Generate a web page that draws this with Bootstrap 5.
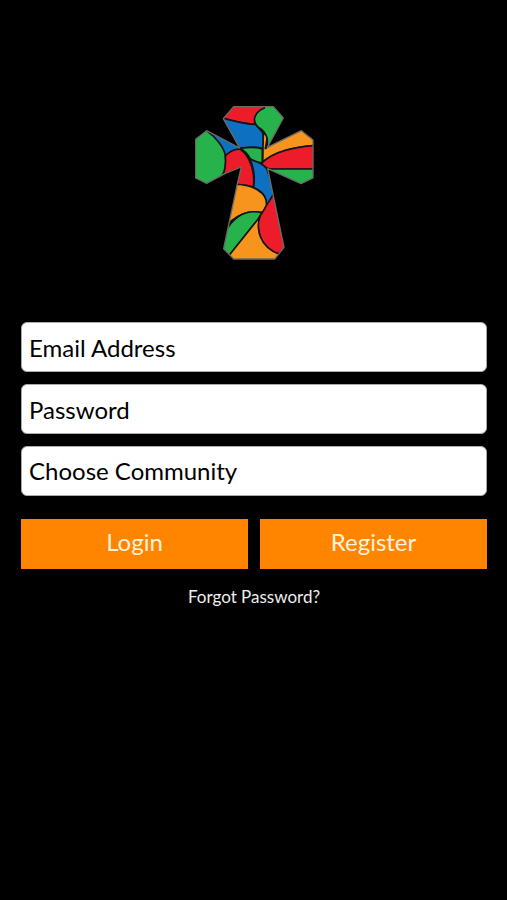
<!DOCTYPE html>
<html lang="en">
<head>
<meta charset="utf-8">
<meta name="viewport" content="width=device-width, initial-scale=1">
<title>Login</title>
<link href="https://cdn.jsdelivr.net/npm/bootstrap@5.3.0/dist/css/bootstrap.min.css" rel="stylesheet">
<style>
body { background: #000; font-family: Lato, "Open Sans", sans-serif; }
.login-page { padding: 98px 20px 24px 21px; }
.logo { width: 140px; height: 170px; margin-bottom: 54px; }
.field { height: 50px; padding: 0 7px; border: 1px solid #aaa; border-radius: 6px; background: #fff; color: #000; font-size: 24px; line-height: 32px; }
.field::placeholder { color: #000; opacity: 1; }
.fields, .actions { gap: 12px; }
.actions { margin-top: 23px; }
.btn-brand { --bs-btn-color: #fff3dc; --bs-btn-bg: #ff8400; --bs-btn-hover-color: #fff; --bs-btn-hover-bg: #e67600; --bs-btn-active-color: #fff; --bs-btn-active-bg: #cc6900; height: 50px; padding: 0 8px 4px; border: 0; font-size: 24px; line-height: 32px; }
.forgot { margin-top: 16px; color: #eee; font-size: 17px; line-height: 24px; }
</style>
<script defer src="https://cdn.jsdelivr.net/npm/bootstrap@5.3.0/dist/js/bootstrap.bundle.min.js"></script>
</head>
<body>
<main class="login-page d-flex flex-column">
  <svg class="logo align-self-center" viewBox="-4 0 420 510" role="img" aria-label="Stained glass cross">
    <defs>
      <clipPath id="cross"><path d="M145 26H264L294 60L246 148L348 98L383 126V240L347 257L247 212L296 448L268 483H145L115 452L155 262L168 207L120 226L64 256L31 240V124L64 98L163 150L114 62Z"/></clipPath>
    </defs>
    <g clip-path="url(#cross)" stroke="#151515" stroke-width="5" stroke-linejoin="round">
      <path fill="#0d70c0" d="M40 80L200 130V170L164 154C147 155 132 162 118 175L100 185Z"/>
      <path fill="#27b34b" d="M20 80L64 98C92 118 117 150 120 173C123 190 121 207 118 226L64 270L20 245Z"/>
      <path fill="#ed1c2b" d="M100 62L145 10H245V30C216 42 200 60 212 79C180 80 150 68 100 62Z"/>
      <path fill="#0d70c0" d="M105 58C150 70 180 80 212 79C216 89 228 94 234 108V151C205 144 186 150 163 150L100 70Z"/>
      <path fill="#27b34b" d="M237 10H264L310 60L246 160V124C242 107 234 96 218 87C196 67 211 40 237 30Z"/>
      <path fill="#f7941e" d="M234 104Q243 110 245 122L240 152L348 85L395 126V142C326 147 265 164 232 194Z"/>
      <path fill="#ed1c2b" d="M228 196C265 159 325 147 395 142V214H256C240 209 232 203 228 196Z"/>
      <path fill="#27b34b" d="M225 213H395V270H347Z"/>
      <path fill="#27b34b" d="M164 151C186 148 205 144 231 153V194L222 194C208 192 199 187 194 181C185 165 177 158 164 151Z"/>
      <path fill="#0d70c0" d="M194 183C211 193 228 190 244 212L275 296L243 323C242 294 231 279 204 269C210 241 205 209 194 183Z"/>
      <path fill="#ed1c2b" d="M120 174C135 158 151 153 164 153C194 174 210 222 204 268C191 260 174 261 135 261L150 218L110 235C119 219 122 196 120 174Z"/>
      <path fill="#f7941e" d="M135 259C205 256 248 286 243 323C241 333 235 339 230 344C190 336 156 345 105 400Z"/>
      <path fill="#27b34b" d="M120 402C144 358 181 333 230 344L217 366L134 470L95 460Z"/>
      <path fill="#ed1c2b" d="M265 288L243 323L231 344C213 365 217 394 225 416C235 442 251 458 276 468L310 450Z"/>
      <path fill="#f7941e" d="M224 356C215 374 220 405 225 416C235 442 251 458 285 470L270 495H130L125 480Z"/>
    </g>
    <path fill="none" stroke="#6b6b66" stroke-width="4" stroke-linejoin="round" d="M145 26H264L294 60L246 148L348 98L383 126V240L347 257L247 212L296 448L268 483H145L115 452L155 262L168 207L120 226L64 256L31 240V124L64 98L163 150L114 62Z"/>
  </svg>
  <form>
    <div class="fields d-grid">
      <input type="email" class="field form-control" placeholder="Email Address" aria-label="Email Address">
      <input type="password" class="field form-control" placeholder="Password" aria-label="Password">
      <select class="field form-control" aria-label="Choose Community"><option>Choose Community</option></select>
    </div>
    <div class="actions d-flex">
      <button type="submit" class="btn btn-brand rounded-0 flex-fill w-50">Login</button>
      <button type="button" class="btn btn-brand rounded-0 flex-fill w-50">Register</button>
    </div>
  </form>
  <a href="#" class="forgot align-self-center text-decoration-none">Forgot Password?</a>
</main>
</body>
</html>
